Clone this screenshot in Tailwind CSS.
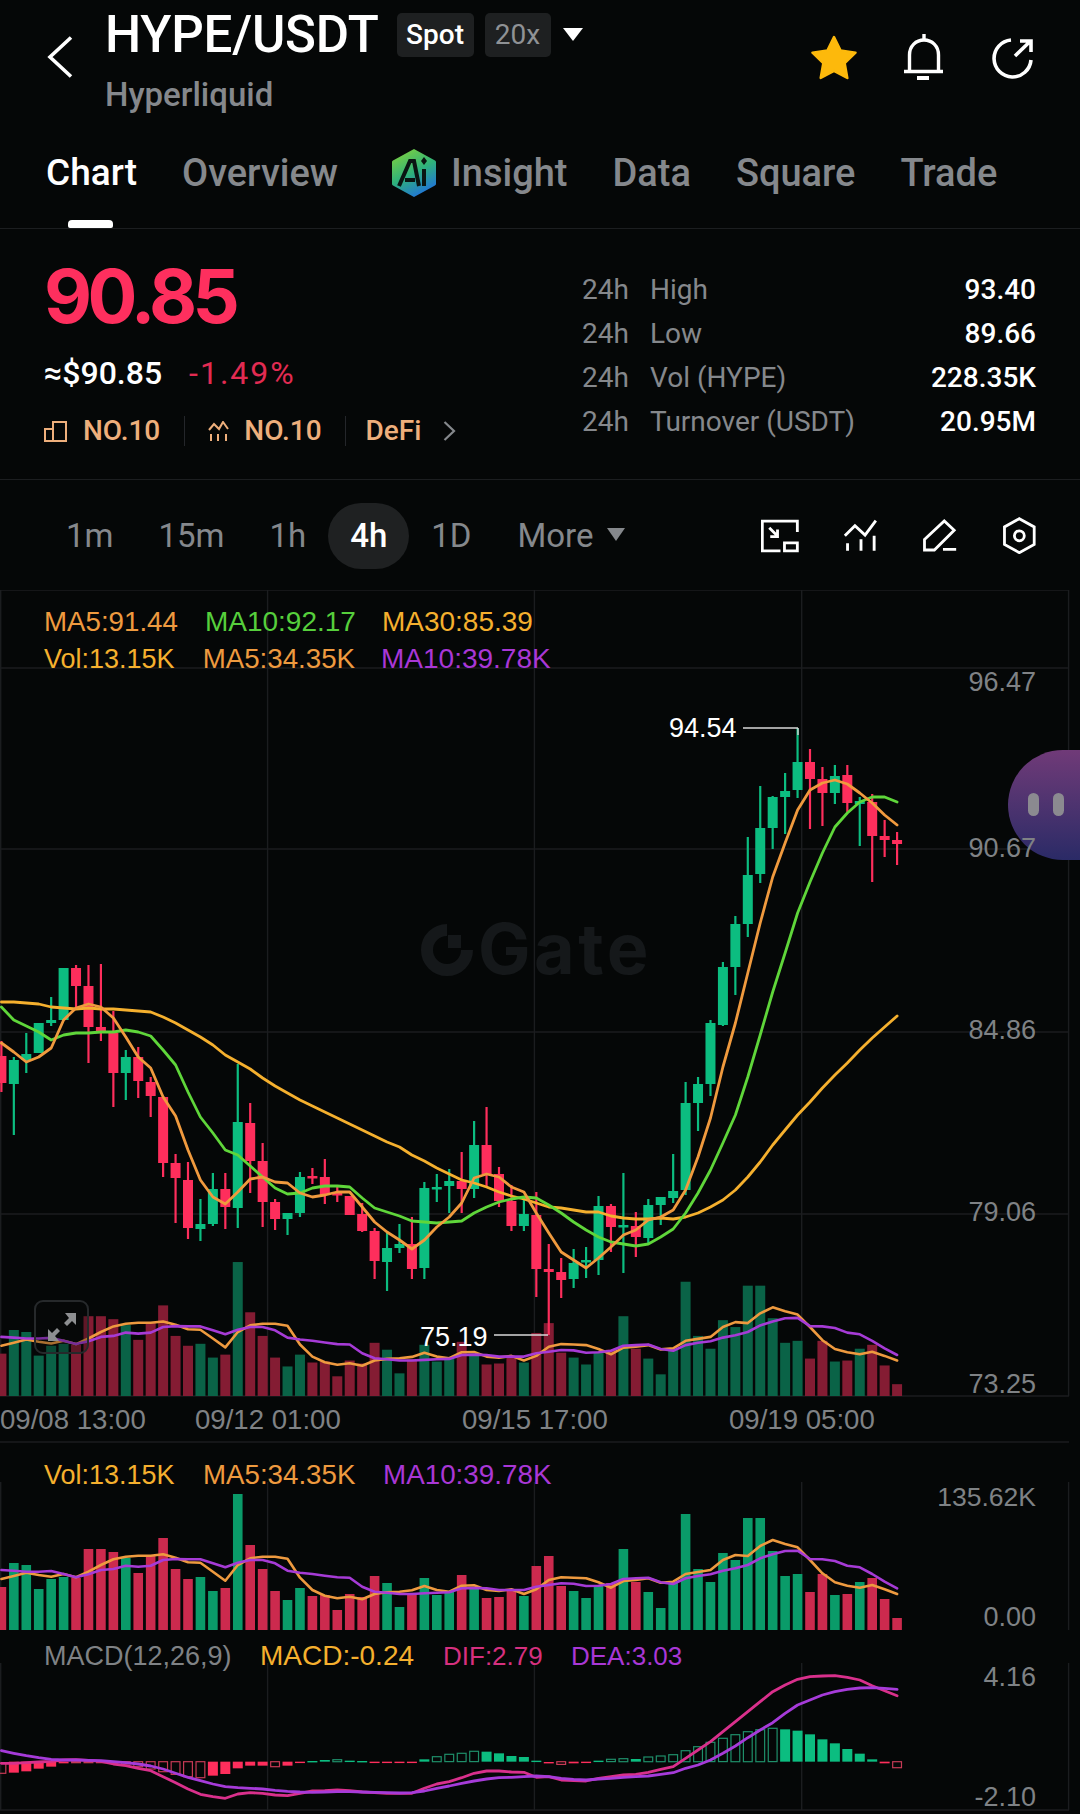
<!doctype html>
<html lang="en">
<head>
<meta charset="utf-8">
<title>HYPE/USDT</title>
<script src="https://cdn.jsdelivr.net/npm/@tailwindcss/browser@4"></script>
</head>
<body class="bg-[#050707]">
<div class="relative w-[1080px] h-[1814px] overflow-hidden bg-[#050707] font-['Roboto',sans-serif] text-white">

  <!-- Header -->
  <header class="relative h-[229px] border-b border-[#1c1e20]">
    <div class="flex h-[132px]">
      <svg class="ml-[47px] mt-[36px] w-[27px] h-[42px]" viewBox="0 0 27 42" fill="none" stroke="#fff" stroke-width="3.6"><path d="M24 1.5 3 21l21 19.5"/></svg>
      <div class="ml-[31px]">
        <div class="flex items-start">
          <h1 class="mt-[5px] text-[51px] leading-[60px] font-medium tracking-[-0.2px]">HYPE/USDT</h1>
          <span class="ml-[18px] mt-[13px] h-[44px] w-[77px] rounded-[5px] bg-[#1e2021] text-center text-[28px] leading-[44px] font-medium">Spot</span>
          <span class="ml-[11px] mt-[13px] h-[44px] w-[66px] rounded-[5px] bg-[#1e2021] text-center text-[28px] leading-[44px] text-[#8f9295]">20x</span>
          <svg class="ml-[12px] mt-[28px] w-[20px] h-[13px]" viewBox="0 0 20 13"><path d="M0 0h20L10 13z" fill="#fff"/></svg>
        </div>
        <div class="mt-[10px] text-[33px] leading-[40px] font-medium text-[#85888c]">Hyperliquid</div>
      </div>
      <div class="ml-auto mt-[34px] flex items-start">
        <svg class="mt-[1px] w-[46px] h-[45px]" viewBox="0 0 46 45"><path d="M23 2l6.6 13.6 14.9 2.1-10.8 10.5 2.6 14.8L23 36l-13.300 7 2.600-14.800L1.500 17.700l14.900-2.100z" fill="#fdb90b" stroke="#fdb90b" stroke-width="2.500" stroke-linejoin="round"/></svg>
        <svg class="ml-[47px] w-[40px] h-[48px]" viewBox="0 0 40 48" fill="none" stroke="#fff" stroke-width="3.400"><path d="M5.500 37V21C5.500 12 12 6 20 6s14.500 6 14.500 15v16"/><path d="M0 37.500h39M20 0v5"/><path d="M13 44h12" stroke-width="4"/></svg>
        <svg class="ml-[48px] mt-[3px] mr-[45px] w-[43px] h-[43px]" viewBox="0 0 43 43" fill="none" stroke="#fff" stroke-width="3.600"><path d="M19 3A18.500 18.500 0 1 0 39 23"/><path d="M23 19 38 4.500M28 4h11v11"/></svg>
      </div>
    </div>
    <nav class="flex items-center gap-[45px] pl-[46px] h-[82px] text-[38px] font-medium text-[#85888c]">
      <span class="text-[37px] text-white">Chart</span>
      <span>Overview</span>
      <span class="ml-[8px] flex items-center gap-[14px]">
        <svg class="w-[46px] h-[50px]" viewBox="0 0 46 50">
          <defs><linearGradient id="aig" x1="0.2" y1="0" x2="0.7" y2="1"><stop offset="0" stop-color="#7ed13e"/><stop offset="0.5" stop-color="#2fb27a"/><stop offset="1" stop-color="#1f6fe0"/></linearGradient></defs>
          <path d="M23 1 44 12.500a2 2 0 0 1 1 2V35.500a2 2 0 0 1-1 2L23 49 2 37.500a2 2 0 0 1-1-2V14.500a2 2 0 0 1 1-2z" fill="url(#aig)"/>
          <path d="M8 38 19 13h4l5 25M14 32h10" fill="none" stroke="#0a1512" stroke-width="4"/>
          <path d="M33 21v17" stroke="#0a1512" stroke-width="4"/>
          <path d="M33 9l3 4-3 4-3-4z" fill="#0a1512"/>
        </svg>
        <span>Insight</span>
      </span>
      <span>Data</span>
      <span>Square</span>
      <span>Trade</span>
    </nav>
    <span class="absolute left-[68px] bottom-0 h-[8px] w-[45px] rounded-t-[4px] rounded-b-[2px] bg-white"></span>
  </header>

  <!-- Price stats -->
  <section class="flex h-[251px] border-b border-[#1c1e20]">
    <div class="pl-[44px]">
      <div class="mt-[22px] text-[74px] leading-[90px] font-['Inter',sans-serif] font-bold tracking-[-4.500px] text-[#fe2f5e]">90.85</div>
      <div class="mt-[12px] flex items-center h-[40px] text-[32px] font-medium">
        <span>≈$90.85</span>
        <span class="ml-[27px] font-normal tracking-[2px] text-[#e22b52]">-1.49%</span>
      </div>
      <div class="mt-[18px] flex items-center h-[40px] text-[28px] font-medium text-[#eeaf7c]">
        <svg class="w-[23px] h-[21px]" viewBox="0 0 23 21" fill="none" stroke="#eeaf7c" stroke-width="2"><path d="M9 8H1v12h8zM9 20V1h13v19H9"/></svg>
        <span class="ml-[16px]">NO.10</span>
        <span class="ml-[24px] h-[30px] w-px bg-[#24262a]"></span>
        <svg class="ml-[23px] w-[22px] h-[20px]" viewBox="0 0 22 20" fill="none" stroke="#eeaf7c" stroke-width="2"><path d="M1 9 6 3l5 5 4-7 5 7M3 13v7M10 13v7M18 13v7"/></svg>
        <span class="ml-[14px]">NO.10</span>
        <span class="ml-[23px] h-[30px] w-px bg-[#24262a]"></span>
        <span class="ml-[20px]">DeFi</span>
        <svg class="ml-[22px] w-[13px] h-[20px]" viewBox="0 0 13 20" fill="none" stroke="#85888c" stroke-width="2.200"><path d="M1.500 1 11 10l-9.500 9"/></svg>
      </div>
    </div>
    <div class="ml-auto mr-[44px] mt-[39px] w-[454px] text-[28px] leading-[44px] text-[#85888c]">
      <div class="flex"><span class="w-[68px]">24h</span><span>High</span><span class="ml-auto font-medium text-white">93.40</span></div>
      <div class="flex"><span class="w-[68px]">24h</span><span>Low</span><span class="ml-auto font-medium text-white">89.66</span></div>
      <div class="flex"><span class="w-[68px]">24h</span><span>Vol (HYPE)</span><span class="ml-auto font-medium text-white">228.35K</span></div>
      <div class="flex"><span class="w-[68px]">24h</span><span>Turnover (USDT)</span><span class="ml-auto font-medium text-white">20.95M</span></div>
    </div>
  </section>

  <!-- Toolbar -->
  <section class="flex items-center h-[110px] pt-[1px] text-[33px] text-[#85888c]">
    <span class="ml-[66px]">1m</span>
    <span class="ml-[45px]">15m</span>
    <span class="ml-[45px]">1h</span>
    <span class="ml-[22px] flex h-[66px] w-[81px] items-center justify-center rounded-full bg-[#1f2122] font-medium text-white">4h</span>
    <span class="ml-[22px]">1D</span>
    <span class="ml-[46px]">More</span>
    <svg class="ml-[13px] mb-[3px] w-[18px] h-[13px]" viewBox="0 0 18 13"><path d="M0 0h18L9 13z" fill="#85888c"/></svg>
    <svg class="ml-auto w-[38px] h-[34px]" viewBox="60 40 115 100" fill="none" stroke="#fff" stroke-width="8.500"><path d="M170 78V45H64v90h55"/><path d="M131 111h39v24h-39zM85 65l25 25M110 70v22H88"/></svg>
    <svg class="ml-[44px] w-[34px] h-[33px]" viewBox="305 40 100 98" fill="none" stroke="#fff" stroke-width="8.500"><path d="M310 90l30-30 30 28 32-43M318 112v22M358 100v34M397 90v44"/></svg>
    <svg class="ml-[45px] w-[35px] h-[33px]" viewBox="545 38 105 100" fill="none" stroke="#fff" stroke-width="8.500"><path d="M552 100l60-56 30 28-60 60h-30zM608 130h40"/></svg>
    <svg class="ml-[45px] mr-[43px] w-[35px] h-[37px]" viewBox="785 35 105 112" fill="none" stroke="#fff" stroke-width="8.500"><path d="M837 40l45 25v53l-45 25-45-25V65z"/><circle cx="837" cy="92" r="15"/></svg>
  </section>

  <!-- Chart -->
  <section class="relative h-[1224px] font-['Liberation_Sans',sans-serif] text-[28px] leading-[30px]">
    <svg id="chart" class="absolute left-0 top-0 w-[1080px] h-[1224px]" viewBox="0 590 1080 1224"></svg>
    <div class="absolute right-0 top-[160px] h-[110px] w-[72px] rounded-l-[55px] bg-linear-to-b from-[#703a78] to-[#2a2a66]">
      <span class="absolute left-[20px] top-[43px] h-[23px] w-[11px] rounded-full bg-[#8b8a90]"></span>
      <span class="absolute left-[45px] top-[43px] h-[23px] w-[11px] rounded-full bg-[#8b8a90]"></span>
    </div>

    <div class="relative h-[78px] pl-[44px] pt-[17px]">
      <div class="flex h-[32px]"><span class="text-[27.7px] text-[#ee9a3f]">MA5:91.44</span><span class="ml-[27px] text-[#56cf3c]">MA10:92.17</span><span class="ml-[26px] text-[#f5b02e]">MA30:85.39</span></div>
      <div class="mt-[5px] flex h-[32px]"><span class="text-[27px] text-[#f5b02e]">Vol:13.15K</span><span class="ml-[28px] text-[27.7px] text-[#ee9a3f]">MA5:34.35K</span><span class="ml-[26px] text-[#a937d6]">MA10:39.78K</span></div>
    </div>

    <span class="absolute right-[44px] top-[77px] text-[27px] text-[#7f8285]">96.47</span>
    <span class="absolute right-[44px] top-[243px] text-[27px] text-[#7f8285]">90.67</span>
    <span class="absolute right-[44px] top-[425px] text-[27px] text-[#7f8285]">84.86</span>
    <span class="absolute right-[44px] top-[607px] text-[27px] text-[#7f8285]">79.06</span>
    <span class="absolute right-[44px] top-[779px] text-[27px] text-[#7f8285]">73.25</span>

    <span class="absolute left-[669px] top-[123px] text-[27px] text-white">94.54</span>
    <span class="absolute left-[420px] top-[732px] text-[27px] text-white">75.19</span>

    <div class="absolute left-[34px] top-[710px] flex h-[54px] w-[55px] items-center justify-center rounded-[9px] border-2 border-[#26292b] bg-[#0b0d0e]/30">
      <svg class="w-[30px] h-[28px]" viewBox="0 0 30 28" fill="#8d8f91"><path d="M29 0v12l-4-4-5 5-3-3 5-5-4-5zM1 28V16l4 4 5-5 3 3-5 5 4 5z"/></svg>
    </div>

    <span class="absolute left-0 top-[815px] text-[27.6px] text-[#7f8285]">09/08 13:00</span>
    <span class="absolute left-[195px] top-[815px] text-[27.6px] text-[#7f8285]">09/12 01:00</span>
    <span class="absolute left-[462px] top-[815px] text-[27.6px] text-[#7f8285]">09/15 17:00</span>
    <span class="absolute left-[729px] top-[815px] text-[27.6px] text-[#7f8285]">09/19 05:00</span>

    <span class="absolute left-[44px] top-[870px] text-[27px] text-[#f5b02e]">Vol:13.15K</span>
    <span class="absolute left-[203px] top-[870px] text-[27.7px] text-[#ee9a3f]">MA5:34.35K</span>
    <span class="absolute left-[383px] top-[870px] text-[27.8px] text-[#a937d6]">MA10:39.78K</span>
    <span class="absolute right-[44px] top-[892px] text-[26.5px] text-[#7f8285]">135.62K</span>
    <span class="absolute right-[44px] top-[1012px] text-[27px] text-[#7f8285]">0.00</span>

    <span class="absolute left-[44px] top-[1051px] text-[27px] text-[#7f8285]">MACD(12,26,9)</span>
    <span class="absolute left-[260px] top-[1051px] text-[#f5b02e]">MACD:-0.24</span>
    <span class="absolute left-[443px] top-[1051px] text-[26px] text-[#d6307f]">DIF:2.79</span>
    <span class="absolute left-[571px] top-[1051px] text-[26px] text-[#a937d6]">DEA:3.03</span>
    <span class="absolute right-[44px] top-[1072px] text-[27px] text-[#7f8285]">4.16</span>
    <span class="absolute right-[44px] top-[1192px] text-[27px] text-[#7f8285]">-2.10</span>
  </section>
</div>

<script>
var X=function(i){return 1.4+12.44*i};
var candles=[
"r 1041 1056 1083 1092","g 1057 1060 1084 1135","g 1033 1054 1060 1073","g 1023 1023 1053 1053","g 997 1020 1023 1026","g 968 968 1020 1020","r 965 968 986 1008","r 965 986 1027 1063","r 964 1027 1032 1041","r 1011 1033 1073 1107","g 1050 1057 1073 1100","r 1047 1057 1081 1098","r 1077 1082 1096 1117","r 1096 1097 1163 1177","r 1154 1163 1178 1223","r 1162 1180 1228 1239","g 1199 1224 1229 1241","g 1173 1189 1224 1226","r 1173 1189 1207 1229","g 1064 1122 1208 1228","r 1103 1123 1161 1193","r 1143 1161 1202 1227","r 1199 1202 1219 1230","g 1213 1213 1219 1235","g 1172 1177 1213 1217","r 1168 1176 1178 1184","r 1159 1177 1195 1204","r 1185 1193 1195 1202","r 1196 1196 1215 1215","r 1203 1214 1231 1232","r 1228 1231 1261 1279","g 1232 1248 1262 1291","g 1224 1244 1248 1253","r 1217 1244 1269 1279","g 1182 1188 1268 1279","g 1174 1187 1188 1202","g 1169 1181 1186 1213","r 1152 1181 1189 1213","g 1121 1145 1189 1198","r 1107 1145 1174 1187","r 1167 1174 1201 1207","r 1185 1201 1226 1231","g 1200 1214 1226 1231","r 1192 1215 1269 1297","r 1244 1269 1272 1335","r 1258 1272 1280 1298","g 1249 1263 1279 1288","g 1247 1260 1262 1278","g 1196 1206 1260 1275","r 1204 1206 1227 1252","g 1173 1225 1227 1273","r 1212 1226 1237 1257","g 1199 1205 1238 1243","g 1197 1197 1205 1225","g 1154 1191 1198 1203","g 1082 1103 1190 1195","g 1077 1084 1103 1131","g 1020 1023 1084 1096","g 962 967 1025 1026","g 916 924 967 995","g 837 875 924 937","g 786 828 874 883","g 796 797 828 849","g 773 791 797 834","g 728 762 790 798","r 749 762 779 829","r 767 779 793 826","g 765 776 793 804","r 765 775 803 812","g 797 801 804 846","r 794 802 836 882","r 820 836 840 857","r 832 840 844 865"];
var ma5=[1043,1052,1062,1057,1048,1020,1008,1004,1007,1018,1037,1057,1068,1097,1116,1150,1180,1197,1204,1192,1179,1177,1182,1183,1193,1197,1195,1192,1192,1207,1222,1232,1240,1249,1240,1227,1217,1203,1178,1174,1177,1187,1192,1213,1233,1252,1260,1268,1258,1247,1235,1230,1220,1217,1210,1190,1157,1118,1067,1023,973,923,877,843,810,790,783,780,784,793,803,815,825];
var ma10=[1007,1020,1026,1032,1040,1035,1033,1033,1032,1032,1030,1032,1036,1050,1065,1092,1117,1133,1150,1155,1166,1177,1188,1194,1193,1188,1186,1186,1187,1198,1208,1212,1216,1221,1222,1223,1222,1221,1213,1207,1202,1199,1197,1198,1205,1213,1222,1230,1237,1242,1244,1246,1244,1237,1229,1213,1193,1170,1143,1115,1077,1035,992,953,913,882,853,827,813,802,797,797,802];
var ma30=[1002,1002,1003,1004,1007,1008,1009,1008,1009,1009,1010,1011,1012,1017,1023,1030,1037,1045,1055,1062,1069,1078,1086,1093,1100,1106,1112,1118,1124,1130,1136,1142,1147,1155,1161,1168,1174,1180,1183,1187,1192,1196,1199,1203,1207,1208,1210,1212,1212,1216,1218,1219,1219,1218,1219,1217,1213,1207,1200,1190,1177,1162,1145,1130,1115,1102,1088,1075,1063,1050,1038,1027,1016];
var volH=[43,67,65,41,51,53,52,81,81,78,72,57,75,92,61,51,53,39,42,136,85,61,39,30,42,34,35,20,36,33,54,47,23,37,52,35,38,55,42,32,33,40,34,64,74,44,39,32,44,47,81,48,38,22,47,116,61,48,77,70,112,112,79,54,56,38,56,35,36,48,52,31,12];
var vm5=[477,468,458,465,470,462,472,455,435,418,410,407,407,403,413,427,428,455,482,435,415,410,410,416,473,510,527,535,530,538,522,517,515,511,498,510,515,497,496,510,513,508,522,508,480,472,473,475,487,503,483,480,475,488,485,462,456,450,420,405,408,378,360,372,382,420,460,487,497,503,495,508,522];
var vm10=[450,452,455,455,453,462,472,463,450,447,437,440,437,420,417,418,418,430,442,428,420,420,430,452,458,462,467,472,473,500,515,518,522,522,520,518,517,505,504,505,510,510,510,500,495,490,491,498,497,492,477,475,473,487,492,475,468,463,452,445,435,415,403,393,392,417,418,423,437,442,462,485,505];
var dea=[992,1000,1007,1013,1018,1020,1020,1021,1022,1025,1028,1032,1038,1047,1060,1072,1082,1092,1100,1103,1105,1107,1111,1114,1116,1117,1116,1115,1115,1116,1117,1118,1119,1118,1113,1105,1098,1090,1083,1077,1073,1072,1070,1068,1070,1075,1078,1080,1077,1075,1072,1070,1068,1063,1058,1045,1035,1020,1000,978,953,930,908,880,855,840,825,815,808,804,803,805,808];
var dif=[1030,1030,1028,1026,1024,1020,1019,1021,1024,1032,1037,1045,1052,1070,1088,1107,1123,1130,1135,1122,1118,1120,1125,1127,1120,1113,1112,1110,1112,1116,1118,1120,1120,1120,1105,1092,1085,1073,1060,1053,1053,1056,1057,1072,1070,1080,1082,1083,1075,1070,1065,1063,1057,1048,1040,1015,990,965,935,905,875,845,815,795,778,770,768,767,772,780,797,812,827];
var hist=["rh 1030 1060","r 1025 1058","r 1025 1054","r 1025 1046","r 1025 1040","r 1025 1030","rh 1025 1028","rh 1025 1027","rh 1025 1027","rh 1025 1028","rh 1025 1032","rh 1025 1040","rh 1025 1047","rh 1025 1055","rh 1025 1063","rh 1025 1070","rh 1025 1073","r 1025 1067","r 1025 1062","r 1025 1045","r 1025 1037","r 1025 1037","rh 1025 1040","r 1025 1037","r 1025 1028","g 1023 1025","g 1020 1025","gh 1019 1025","g 1022 1025","g 1023 1025","r 1025 1028","r 1025 1028","r 1025 1027","r 1025 1028","g 1018 1025","gh 1010 1025","gh 1003 1025","gh 1000 1025","gh 994 1025","g 995 1025","g 1000 1025","g 1008 1025","g 1011 1025","g 1022 1025","r 1026 1029","rh 1025 1033","r 1025 1030","r 1025 1028","g 1022 1025","gh 1018 1025","gh 1016 1025","g 1017 1025","gh 1011 1025","gh 1008 1025","gh 1004 1025","gh 992 1025","gh 980 1025","gh 967 1025","gh 955 1025","gh 944 1025","gh 935 1025","gh 929 1025","gh 925 1025","g 928 1025","g 932 1025","g 943 1025","g 958 1025","g 970 1025","g 987 1025","g 1001 1025","g 1018 1025","r 1025 1030","rh 1025 1043"];
var s=[];
function line(x1,y1,x2,y2,c,w){s.push('<line x1="'+x1+'" y1="'+y1+'" x2="'+x2+'" y2="'+y2+'" stroke="'+c+'" stroke-width="'+(w||1.4)+'"/>')}
function rect(x,y,w,h,c){s.push('<rect x="'+x+'" y="'+y+'" width="'+w+'" height="'+h+'" fill="'+c+'"/>')}
function poly(a,c,w,f){var p=a.map(function(v,i){return X(i).toFixed(1)+','+f(v).toFixed(1)}).join(' ');s.push('<polyline points="'+p+'" fill="none" stroke="'+c+'" stroke-width="'+(w||2.8)+'" stroke-linejoin="round" stroke-linecap="round"/>')}
var G='#1b1d1f';
[590,668,849,1032,1214,1396,1442,1810].forEach(function(y){line(0,y,1069,y,G)});
[0.7,267.6,534.4,801.7,1068.6].forEach(function(x){line(x,590,x,1396,G);line(x,1482,x,1630,G);line(x,1663,x,1810,G)});
/* watermark */
s.push('<path d="M447 930A20 20 0 1 0 467 950" fill="none" stroke="#15181a" stroke-width="12"/><rect x="448" y="935" width="13" height="13" fill="#15181a"/>');
s.push('<text x="478" y="974" font-family="Inter" font-weight="700" font-size="70" letter-spacing="3.500" fill="#15181a">Gate</text>');
/* overlaid volume */
volH.forEach(function(h,i){var k=h*0.985;rect(X(i)-5,1396-k,10,k,(candles[i][0]=='g')?'#0a6347':'#841c33')});
poly(vm5,'#ee9a3f',2.6,function(v){return 1396-(630-v)/3*0.985});
poly(vm10,'#a63bd6',2.6,function(v){return 1396-(630-v)/3*0.985});
/* candles */
candles.forEach(function(c,i){var p=c.split(' '),col=p[0]=='g'?'#0cbd80':'#fe2e5c',x=X(i);
 line(x,+p[1],x,+p[4],col,2.2);rect(x-5,+p[2],10,Math.max(2.5,p[3]-p[2]),col)});
poly(ma30,'#f5b02e',2.8,function(v){return v});
poly(ma10,'#5fd63a',2.8,function(v){return v});
poly(ma5,'#f09a3e',2.8,function(v){return v});
/* leaders */
line(743,728,798,728,'#d8d8d8',1.4);line(798,728,798,735,'#d8d8d8',1.4);
line(494,1335,548,1335,'#d8d8d8',1.4);
/* volume panel */
volH.forEach(function(h,i){rect(X(i)-4.8,1630-h,9.6,h,(candles[i][0]=='g')?'#0a9b69':'#cc2a4e')});
poly(vm5,'#ee9a3f',2.6,function(v){return 1420+v/3});
poly(vm10,'#a63bd6',2.6,function(v){return 1420+v/3});
/* macd */
hist.forEach(function(c,i){var p=c.split(' '),g=p[0][0]=='g',y1=1420+p[1]/3,y2=1420+p[2]/3,x=X(i);
 if(p[0].length>1){s.push('<rect x="'+(x-4.4)+'" y="'+y1.toFixed(1)+'" width="8.800" height="'+Math.max(1,(y2-y1)).toFixed(1)+'" fill="none" stroke-width="1.2" stroke="'+(g?'#1f8f6a':'#c53a55')+'"/>')}
 else rect(x-5,y1,10,Math.max(1.4,y2-y1),g?'#0cbd80':'#fe2e5c')});
poly(dif,'#d9308c',2.8,function(v){return 1420+v/3});
poly(dea,'#a63bd9',2.8,function(v){return 1420+v/3});
document.getElementById('chart').innerHTML=s.join('');
</script>
</body>
</html>
